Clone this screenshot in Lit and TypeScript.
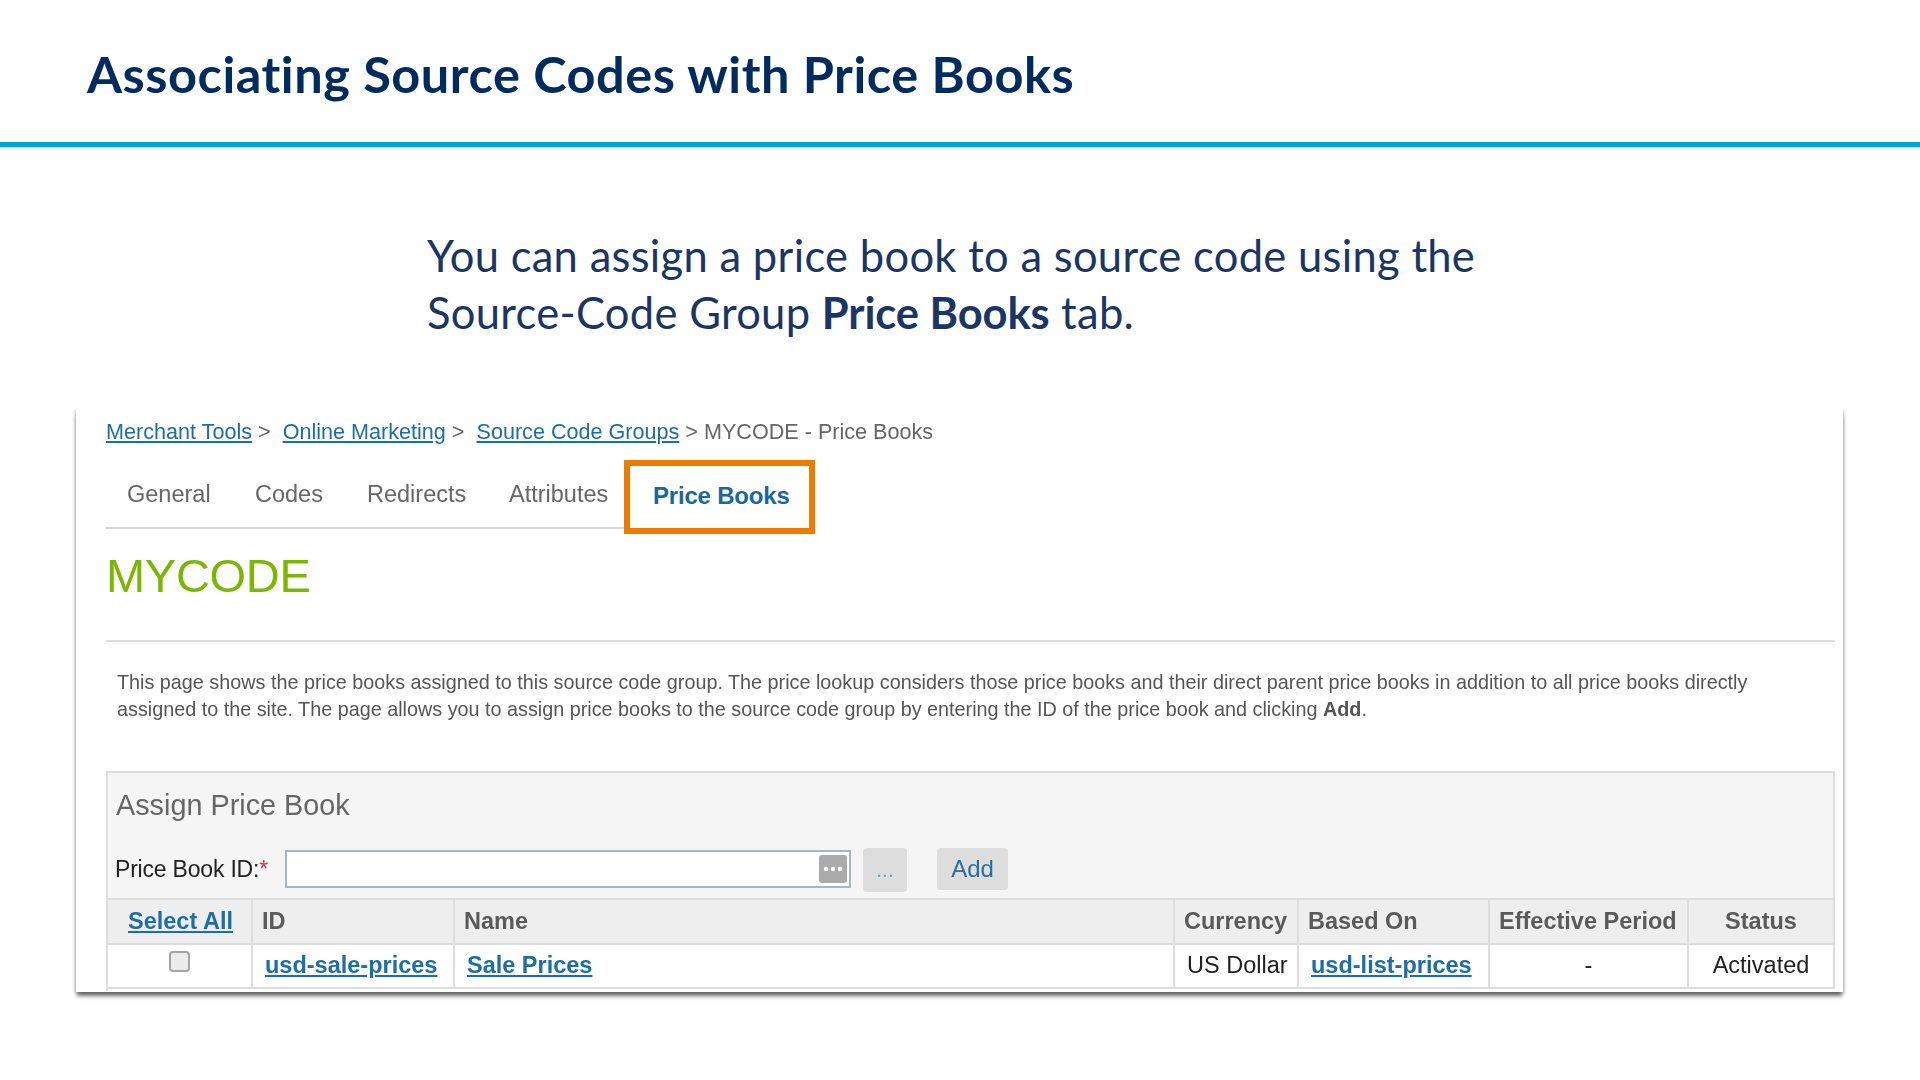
import { LitElement, html, css } from "lit";
import { customElement } from "lit/decorators.js";

@customElement("app-root")
export class AppRoot extends LitElement {
  static styles = css`
    :host { display: block; width: 1920px; height: 1080px; background: #fff; overflow: hidden; font-family: "Liberation Sans", Arial, sans-serif; }
    * { box-sizing: border-box; }
    header { height: 147px; padding: 42px 0 0 87px; border-bottom: 5px solid #00a1e0; }
    h1 { margin: 0; font: 700 50.5px/64px Lato, sans-serif; color: #002b5f; letter-spacing: .52px; white-space: nowrap; }
    .lead { margin: 80px 0 0 427px; font: 400 43.5px/57px Lato, sans-serif; color: #1b3565; letter-spacing: .3px; }
    .lead b { font-weight: 700; letter-spacing: -.1px; }
    .shot { margin: 69px 0 0 76px; width: 1767px; height: 582px; overflow: hidden; padding: 0 8px 0 30px; background: #fff; box-shadow: 0 5px 4px -1px rgba(50,50,50,.7), 0 0 3px 1px rgba(170,170,170,.6); clip-path: inset(0 -20px -20px -20px); filter: blur(.35px); }
    a { color: #1c6ea4; text-decoration: underline; text-underline-offset: 2px; }
    .crumbs { padding-top: 9px; font-size: 21.6px; line-height: 26px; color: #666; white-space: pre; }
    .tabs { display: flex; width: fit-content; height: 61px; margin-top: 23px; padding: 0 0 0 21px; border-bottom: 2px solid #d6d6d6; align-items: flex-start; color: #666; font-size: 23.5px; line-height: 28px; }
    .tabs span { padding-top: 12px; }
    .tabs .g { width: 128px; }
    .tabs .c { width: 112px; }
    .tabs .r { width: 142px; }
    .tabs .at { width: 115px; }
    .tabs .pb { position: relative; width: 191px; height: 74px; margin-top: -8px; border: 6px solid #ef7a00; padding: 16px 0 0 23px; color: #19679c; font-weight: 700; background: #fff; font-size: 24px; letter-spacing: -.2px; }
    h2 { margin: 22px 0 0 0; height: 55px; font-weight: 400; font-size: 47px; line-height: 50px; color: #7ab800; letter-spacing: -.3px; }
    .rule { height: 2px; margin-top: 34px; background: #dcdcdc; width: 1729px; }
    .desc { margin: 27px 0 0 11px; white-space: nowrap; font-size: 19.8px; line-height: 27px; color: #555; }
    .assign { width: 1729px; margin-top: 48px; background: #f5f5f5; border: 2px solid #ddd; border-bottom: 0; }
    .assign h3 { margin: 0; padding: 15px 0 0 8px; height: 58px; font-weight: 400; font-size: 28.8px; line-height: 34px; color: #666; }
    .form { display: flex; align-items: flex-start; height: 67px; padding: 19px 0 0 7px; }
    .form label { width: 170px; padding-top: 2px; font-size: 23px; line-height: 34px; color: #222; white-space: nowrap; letter-spacing: -.2px; }
    .form label i { color: #e8334a; font-style: normal; }
    .input { display: flex; justify-content: flex-end; align-items: center; width: 566px; height: 38px; padding-right: 2px; background: #fff; border: 2px solid #a9b5bf; }
    .input svg { display: block; }
    .dots { display: flex; justify-content: center; width: 44px; height: 44px; margin: -2px 0 0 12px; background: #ddd; border-radius: 4px; color: #6f9fc0; font-size: 21px; line-height: 44px; }
    .add { width: 71px; height: 42px; margin: -2px 0 0 30px; background: #ddd; border-radius: 4px; color: #26709f; font-size: 24px; line-height: 41px; text-align: center; }
    .table { display: grid; grid-template-columns: 145px 202px 720px 124px 191px 199px 1fr; }
    .table > div { border-top: 2px solid #ddd; border-right: 2px solid #ddd; font-size: 23.5px; white-space: nowrap; }
    .table > div:nth-child(7n) { border-right: 0; }
    .th { height: 45px; background: #eee; color: #5a5a5a; font-weight: 700; line-height: 42px; padding-left: 9px; }
    .td { height: 44px; background: #fff; line-height: 40px; padding-left: 12px; color: #222; }
    .ctr { text-align: center; padding-left: 0; }
    .th.sel { padding-left: 2px; }
    .link { font-weight: 700; }
    .td.box { padding: 6px 0 0 61px; }
    .cb { width: 21px; height: 21px; background: #ececec; border: 2px solid #a5a5a5; border-radius: 4px; }
    .end { height: 4px; border-top: 2px solid #ddd; background: #fff; width: 1727px; }
  `;

  render() {
    return html`
      <header><h1>Associating Source Codes with Price Books</h1></header>
      <p class="lead">You can assign a price book to a source code using the<br />Source-Code Group <b>Price Books</b> tab.</p>
      <section class="shot">
        <div class="crumbs"><a>Merchant Tools</a> &gt;  <a>Online Marketing</a> &gt;  <a>Source Code Groups</a> &gt; MYCODE - Price Books</div>
        <nav class="tabs">
          <span class="g">General</span><span class="c">Codes</span><span class="r">Redirects</span><span class="at">Attributes</span><span class="pb">Price Books</span>
        </nav>
        <h2>MYCODE</h2>
        <div class="rule"></div>
        <p class="desc">This page shows the price books assigned to this source code group. The price lookup considers those price books and their direct parent price books in addition to all price books directly<br />assigned to the site. The page allows you to assign price books to the source code group by entering the ID of the price book and clicking <b>Add</b>.</p>
        <div class="assign">
          <h3>Assign Price Book</h3>
          <div class="form">
            <label>Price Book ID:<i>*</i></label>
            <div class="input">
              <svg width="28" height="28" viewBox="0 0 28 28"><rect width="28" height="28" rx="3" fill="#ababab"/><circle cx="7" cy="14" r="2.2" fill="#fff"/><circle cx="14" cy="14" r="2.2" fill="#fff"/><circle cx="21" cy="14" r="2.2" fill="#fff"/></svg>
            </div>
            <div class="dots">...</div>
            <div class="add">Add</div>
          </div>
          <div class="table">
            <div class="th ctr sel"><a>Select All</a></div><div class="th">ID</div><div class="th">Name</div><div class="th">Currency</div><div class="th">Based On</div><div class="th">Effective Period</div><div class="th ctr">Status</div>
            <div class="td box"><div class="cb"></div></div><div class="td"><a class="link">usd-sale-prices</a></div><div class="td"><a class="link">Sale Prices</a></div><div class="td">US Dollar</div><div class="td"><a class="link">usd-list-prices</a></div><div class="td ctr">-</div><div class="td ctr">Activated</div>
          </div>
          <div class="end"></div>
        </div>
      </section>
    `;
  }
}
